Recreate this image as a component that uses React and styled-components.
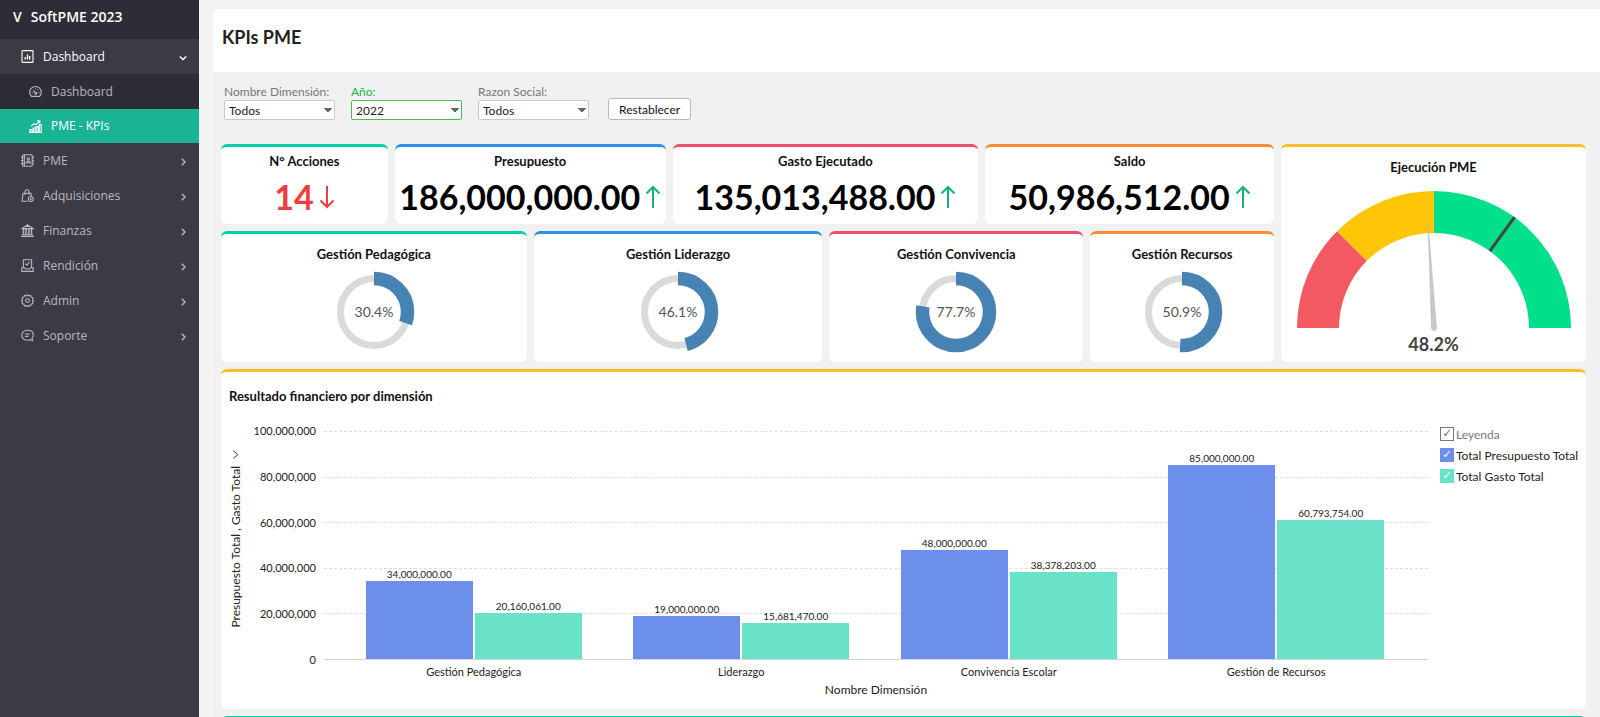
import { useState } from "react";
import styled, { createGlobalStyle } from "styled-components";

const colors = {
    sidebar: "#3c3b45",
    sidebarDark: "#2e2d35",
    active: "#1ab394",
    page: "#f1f1f1",
    teal: "#06cfae",
    blue: "#2f8fe8",
    red: "#ef4f6e",
    orange: "#fd8b33",
    yellow: "#ffbc2b",
    bar1: "#6b8feb",
    bar2: "#68e2c9",
    steel: "#4682b4",
};

const GlobalStyle = createGlobalStyle`
    * {
        box-sizing: border-box;
    }
    body {
        margin: 0;
        background: #f3f3f4;
        color: #222;
        font-family: Lato, "Liberation Sans", sans-serif;
        font-size: 12px;
    }
    button, select, input {
        font-family: inherit;
    }
`;

const Shell = styled.div`
    display: flex;
    height: 100vh;
    overflow: hidden;
`;

/* sidebar */
const Sidebar = styled.nav`
    flex: none;
    width: 199px;
    background: ${colors.sidebar};
    font-family: "Open Sans", "Noto Sans", sans-serif;
`;

const Brand = styled.div`
    display: flex;
    gap: 9px;
    height: 39px;
    padding: 7px 13px;
    background: ${colors.sidebarDark};
    color: #fff;
    font-size: 14px;
    line-height: 20px;
    font-weight: 600;
`;

const Menu = styled.ul`
    list-style: none;
    margin: 0;
    padding: 0;
`;

const MenuLink = styled.a`
    display: flex;
    align-items: center;
    gap: 9px;
    height: ${(p) => (p.$active ? 34 : 35)}px;
    padding: 0 12px 1px ${(p) => (p.$sub ? 29 : 21)}px;
    background: ${(p) => (p.$active ? colors.active : p.$sub ? colors.sidebarDark : "transparent")};
    color: ${(p) => (p.$active || p.$open ? "#fff" : "#b9b8bd")};
    font-size: 12px;
    text-decoration: none;
`;

const MenuText = styled.span`
    flex: 1;
`;

const Icon = styled.svg`
    flex: none;
    width: 13px;
    height: 13px;
    margin-top: 1px;
    fill: none;
    stroke: currentColor;
    stroke-width: 1.1;
`;

const Chevron = styled.svg`
    width: 8px;
    height: 8px;
    margin-top: 4px;
    fill: none;
    stroke: currentColor;
    stroke-width: 1.4;
`;

/* content */
const Main = styled.main`
    flex: 1;
    min-width: 0;
    display: flex;
    flex-direction: column;
    padding: 9px 0 0 14px;
    overflow: hidden;
`;

const PageHeader = styled.header`
    flex: none;
    height: 63px;
    padding: 16px 9px;
    background: #fff;
    border-top-left-radius: 4px;
`;

const PageTitle = styled.h1`
    margin: 0;
    font-size: 18px;
    line-height: 24px;
    font-weight: 700;
`;

const Body = styled.div`
    flex: 1;
    display: flex;
    flex-direction: column;
    gap: 7px;
    padding: 11px 14px 0 8px;
    background: ${colors.page};
`;

const Filters = styled.form`
    display: flex;
    align-items: flex-end;
    gap: 16px;
    padding: 0 3px;
    margin-bottom: 17px;
`;

const Field = styled.label`
    display: flex;
    flex-direction: column;
    width: 111px;
    color: ${(p) => (p.$on ? "#22b14c" : "#777")};
    line-height: 17px;
    white-space: nowrap;
`;

const Select = styled.select`
    appearance: none;
    height: 20px;
    padding: 0 4px;
    border: 1px solid ${(p) => (p.$on ? "#4cba50" : "#c8c9ce")};
    border-radius: 2px;
    background-color: #fff;
    background-image: linear-gradient(to top right, transparent 50%, #666 50%),
        linear-gradient(to bottom right, #666 50%, transparent 50%);
    background-size: 4px 5px;
    background-position: right 6px center, right 2px center;
    background-repeat: no-repeat;
    color: #222;
    font-size: 12px;
`;

const ResetButton = styled.button`
    height: 22px;
    margin-left: 3px;
    padding: 0 10px;
    border: 1px solid #bbb;
    border-radius: 3px;
    background: #fff;
    color: #111;
    font-size: 12px;
`;

const Summary = styled.div`
    display: flex;
    gap: 7px;
`;

const SummaryLeft = styled.div`
    flex: 1053 1 0;
    min-width: 0;
    display: flex;
    flex-direction: column;
    gap: 7px;
`;

const Row = styled.div`
    display: flex;
    gap: 7px;
`;

const Card = styled.section`
    flex: ${(p) => p.$grow || 1} 1 0;
    min-width: 0;
    display: flex;
    flex-direction: column;
    align-items: center;
    background: #fff;
    border-top: 3px solid ${(p) => p.$color};
    border-radius: 6px;
`;

const KpiCard = styled(Card)`
    height: 80px;
    padding-top: 6px;
`;

const DonutCard = styled(Card)`
    gap: 9px;
    height: 131px;
    padding-top: 12px;
`;

const GaugeCard = styled(Card)`
    padding-top: 12px;
`;

const CardTitle = styled.h2`
    margin: 0;
    color: #111;
    font-size: 13px;
    line-height: 16px;
    font-weight: 700;
    white-space: nowrap;
`;

const KpiValue = styled.div`
    display: flex;
    align-items: center;
    gap: 5px;
    margin-top: 8px;
    color: ${(p) => (p.$down ? "#ef3e3e" : "#000")};
    font-size: 34px;
    line-height: 40px;
    font-weight: 700;
`;

const Arrow = styled.svg`
    width: 16px;
    height: 24px;
    fill: none;
    stroke: ${(p) => (p.$down ? "#ef3e3e" : "#12b373")};
    stroke-width: 2;
    transform: ${(p) => (p.$down ? "rotate(180deg)" : "none")};
`;

const Drawing = styled.svg`
    display: block;
    flex: none;
    max-width: 100%;
`;

const DonutText = styled.text`
    fill: #555;
    font-size: 14px;
    text-anchor: middle;
`;

const GaugeDrawing = styled(Drawing)`
    margin-top: 15px;
`;

const GaugeText = styled.div`
    color: #444;
    font-size: 18px;
    line-height: 26px;
    font-weight: 700;
`;

/* chart */
const ChartCard = styled(Card)`
    flex: none;
    align-items: stretch;
    gap: 19px;
    height: 340px;
    padding: 16px 8px 11px 8px;
`;

const ChartBody = styled.div`
    display: grid;
    grid-template-columns: 14px 73px 1fr 150px;
    grid-template-rows: 241px 16px 20px;
`;

const AxisName = styled.button`
    grid-area: 1 / 1;
    align-self: end;
    display: flex;
    align-items: center;
    gap: 7px;
    margin-bottom: 36px;
    padding: 0;
    border: 0;
    background: none;
    color: #222;
    font-size: 12px;
    line-height: 14px;
    writing-mode: vertical-rl;
    transform: rotate(180deg);
    white-space: nowrap;
`;

const Ticks = styled.div`
    grid-area: 1 / 2;
    display: flex;
    flex-direction: column;
    justify-content: space-between;
    margin-bottom: -4px;
    text-align: right;
    font-size: 11px;
    line-height: 16px;
`;

const Grid = styled.div`
    grid-area: 1 / 3;
    display: flex;
    flex-direction: column;
    justify-content: space-between;
    margin: 8px 0 4px 8px;
`;

const GridLine = styled.div`
    border-top: 1px ${(p) => (p.$base ? "solid #d6d6d6" : "dashed #dedede")};
`;

const Groups = styled.div`
    grid-area: 1 / 3;
    display: flex;
    margin: 8px 0 4px 8px;
    padding: 0 18px 0 16px;
`;

const Group = styled.div`
    flex: 1;
    display: flex;
    align-items: flex-end;
    justify-content: center;
    gap: 2px;
    padding-bottom: 1px;
`;

const Bar = styled.div`
    width: 40%;
    background: ${(p) => p.$color};
    color: #222;
    font-size: 10px;
    text-align: center;
`;

const BarValue = styled.div`
    height: 14px;
    margin-top: -14px;
    line-height: 14px;
`;

const Categories = styled.div`
    grid-area: 2 / 3;
    display: flex;
    padding: 0 18px 0 24px;
    font-size: 11px;
    line-height: 16px;
    text-align: center;
`;

const Category = styled.div`
    flex: 1;
`;

const XName = styled.div`
    grid-area: 3 / 3;
    padding-left: 8px;
    font-size: 12px;
    line-height: 20px;
    text-align: center;
`;

const Legend = styled.div`
    grid-area: 1 / 4 / 3 / 5;
    display: flex;
    flex-direction: column;
    gap: 5px;
    padding: 3px 0 0 12px;
`;

const LegendItem = styled.label`
    display: flex;
    align-items: center;
    gap: 2px;
    height: 16px;
    color: ${(p) => (p.$muted ? "#777" : "#222")};
    font-size: 12px;
    white-space: nowrap;
`;

const Check = styled.input`
    appearance: none;
    flex: none;
    display: grid;
    place-items: center;
    width: 14px;
    height: 14px;
    margin: 0;
    border: 1px solid ${(p) => p.$color};
    background: ${(p) => (p.$muted ? "#fff" : p.$color)};
    color: ${(p) => (p.$muted ? "#666" : "#fff")};

    &:checked::before {
        content: "✓";
        font-family: "DejaVu Sans", sans-serif;
        font-size: 11px;
        line-height: 12px;
    }
`;

const NextCard = styled(Card)`
    flex: none;
    height: 40px;
`;

const icons = {
    report: (
        <>
            <rect x="1" y="0.6" width="11" height="11.8" rx="0.6" />
            <path d="M4.3 9.5V7M6.5 9.5V4.5M8.7 9.5V6" strokeWidth="1.4" />
        </>
    ),
    speed: (
        <>
            <path d="M2.4 11.4A5.8 5.8 0 1 1 10.6 11.4Z" />
            <path d="M6.8 8.2 4.2 5.2M2.6 7.6h1M9.4 7.6h1M6.5 3.2v1M9.2 4.6l-.7.7" />
            <circle cx="6.8" cy="8.2" r="1" />
        </>
    ),
    growth: (
        <>
            <path d="M1 12.4V9.6h2v2.8ZM4.3 12.4V8h2v4.4ZM7.2 12.4V6.6h2v5.8ZM10.2 12.4V4.6h2v7.8ZM0 12.4h13" />
            <path d="M2 6.2 5 3.6l1.8 1.2L10.6 1M8 .8h2.8v2.6" />
        </>
    ),
    book: (
        <>
            <rect x="1.6" y="0.8" width="9.6" height="11.4" rx="1" />
            <path d="M3.4.8v11.4M0 3.4h2.4M0 6.5h2.4M0 9.6h2.4M12.4 2.6v2M12.4 6v2M12.4 9.2v1.4" />
            <circle cx="7.3" cy="5" r="1.2" />
            <path d="M5.2 9c0-2.4 4.2-2.4 4.2 0Z" />
        </>
    ),
    bag: (
        <>
            <path d="M6.6 12.3H1L2 4.2h8l.4 3M4 6V2.8a2 2 0 0 1 4 0V6" />
            <circle cx="9.8" cy="10" r="2.5" />
            <path d="M8.9 10h1.8M9.8 9.1v1.8" />
        </>
    ),
    bank: (
        <>
            <path d="M.8 4.6 6.5 1l5.7 3.6ZM0 12.4h13M1 10.8h11M6.5 0v3" />
            <path d="M2.5 5v5.4M5.1 5v5.4M7.9 5v5.4M10.5 5v5.4" strokeWidth="1.5" />
        </>
    ),
    ballot: (
        <>
            <path d="M2.4 8.8V.8h8.2v8M.8 8.8h2.8l.8 1.2h4.2l.8-1.2h2.8v3.6H.8Z" />
            <path d="m4.4 4.6 1.6 1.6 2.8-3.2" />
        </>
    ),
    gear: (
        <>
            <path d="m6.5.6 1.3 1.2 1.8-.4.6 1.7 1.7.7-.4 1.6 1 1.3-1 1.3.3 1.7-1.7.6-.7 1.6-1.7-.3-1.2 1-1.2-1-1.8.3-.6-1.6-1.7-.6.3-1.7-1-1.3 1-1.3-.3-1.6 1.7-.7.6-1.7 1.8.4Z" />
            <circle cx="6.5" cy="6.6" r="1.9" />
        </>
    ),
    chat: (
        <>
            <path d="M6.5 1.2c3.4 0 5.8 1.8 5.8 4.8 0 1.5-.5 2.6-1.3 3.4l.7 2.2-2.6-.8c-.8.3-1.7.4-2.6.4C3.2 11.2.8 9.2.8 6.2s2.4-5 5.7-5Z" />
            <path d="M4 5h5M4 7.4h3.4" />
        </>
    ),
};

const menu = [
    { text: "Dashboard", icon: "report", open: true },
    { text: "Dashboard", icon: "speed", sub: true },
    { text: "PME - KPIs", icon: "growth", sub: true, active: true },
    { text: "PME", icon: "book" },
    { text: "Adquisiciones", icon: "bag" },
    { text: "Finanzas", icon: "bank" },
    { text: "Rendición", icon: "ballot" },
    { text: "Admin", icon: "gear" },
    { text: "Soporte", icon: "chat" },
];

const kpis = [
    { title: "N° Acciones", value: "14", grow: 167, color: colors.teal, down: true },
    { title: "Presupuesto", value: "186,000,000.00", grow: 271, color: colors.blue },
    { title: "Gasto Ejecutado", value: "135,013,488.00", grow: 306, color: colors.red },
    { title: "Saldo", value: "50,986,512.00", grow: 289, color: colors.orange },
];

const donuts = [
    { title: "Gestión Pedagógica", value: 30.4, grow: 306, color: colors.teal },
    { title: "Gestión Liderazgo", value: 46.1, grow: 289, color: colors.blue },
    { title: "Gestión Convivencia", value: 77.7, grow: 254, color: colors.red },
    { title: "Gestión Recursos", value: 50.9, grow: 184, color: colors.orange },
];

const results = [
    { name: "Gestión Pedagógica", budget: 34000000, spent: 20160061 },
    { name: "Liderazgo", budget: 19000000, spent: 15681470 },
    { name: "Convivencia Escolar", budget: 48000000, spent: 38378203 },
    { name: "Gestión de Recursos", budget: 85000000, spent: 60793754 },
];

const ticks = [100000000, 80000000, 60000000, 40000000, 20000000, 0];

const format = (n, digits = 0) =>
    n.toLocaleString("en-US", { minimumFractionDigits: digits });

const Donut = ({ value }) => (
    <Drawing width="82" height="82" viewBox="-41 -41 82 82">
        <circle r="33.5" fill="none" stroke="#d9dadb" strokeWidth="7" />
        <circle
            r="33.5"
            fill="none"
            stroke={colors.steel}
            strokeWidth="13.5"
            pathLength="100"
            strokeDasharray={`${value} 100`}
            transform="rotate(-90)"
        />
        <DonutText y="5">{value}%</DonutText>
    </Drawing>
);

// point on the gauge, t goes from 0 (left) to 100 (right)
const polar = (t, r) => {
    const a = Math.PI * (1 - t / 100);
    return `${(r * Math.cos(a)).toFixed(2)} ${(-r * Math.sin(a)).toFixed(2)}`;
};

const slice = (from, to) =>
    `M${polar(from, 137)}A137 137 0 0 1 ${polar(to, 137)}L${polar(to, 95)}A95 95 0 0 0 ${polar(from, 95)}Z`;

const Gauge = ({ value }) => (
    <GaugeDrawing width="274" height="141" viewBox="-137 -138 274 141">
        <path d={slice(0, 25)} fill="#f25961" />
        <path d={slice(25, 50)} fill="#ffc507" />
        <path d={slice(50, 100)} fill="#00df8a" />
        <path d={`M${polar(70, 95)}L${polar(70, 137)}`} stroke="#444" strokeWidth="3" />
        <path
            d="M-2.5 0 0-103 2.5 0A2.5 2.5 0 0 1-2.5 0Z"
            fill="#c8c8c8"
            stroke="#b5b5b5"
            strokeWidth="0.5"
            transform={`rotate(${(value - 50) * 1.8})`}
        />
    </GaugeDrawing>
);

const App = () => {
    const [year, setYear] = useState("2022");
    const [shown, setShown] = useState({ budget: true, spent: true });

    const toggle = (key) => setShown({ ...shown, [key]: !shown[key] });
    const all = shown.budget && shown.spent;

    return (
        <Shell>
            <GlobalStyle />
            <Sidebar>
                <Brand>
                    <span>V</span>
                    <span>SoftPME 2023</span>
                </Brand>
                <Menu>
                    {menu.map((item) => (
                        <li key={item.icon}>
                            <MenuLink href="#" $sub={item.sub} $active={item.active} $open={item.open}>
                                <Icon viewBox="0 0 13 13">{icons[item.icon]}</Icon>
                                <MenuText>{item.text}</MenuText>
                                {!item.sub && (
                                    <Chevron viewBox="0 0 8 8">
                                        <path d={item.open ? "M.8 2.4 4 5.6 7.2 2.4" : "M2.8.8 6 4 2.8 7.2"} />
                                    </Chevron>
                                )}
                            </MenuLink>
                        </li>
                    ))}
                </Menu>
            </Sidebar>

            <Main>
                <PageHeader>
                    <PageTitle>KPIs PME</PageTitle>
                </PageHeader>
                <Body>
                    <Filters onSubmit={(e) => e.preventDefault()}>
                        <Field>
                            Nombre Dimensión:
                            <Select>
                                <option>Todos</option>
                            </Select>
                        </Field>
                        <Field $on>
                            Año:
                            <Select $on value={year} onChange={(e) => setYear(e.target.value)}>
                                <option>2022</option>
                                <option>2023</option>
                            </Select>
                        </Field>
                        <Field>
                            Razon Social:
                            <Select>
                                <option>Todos</option>
                            </Select>
                        </Field>
                        <ResetButton type="button" onClick={() => setYear("2022")}>
                            Restablecer
                        </ResetButton>
                    </Filters>

                    <Summary>
                        <SummaryLeft>
                            <Row>
                                {kpis.map((k) => (
                                    <KpiCard key={k.title} $grow={k.grow} $color={k.color}>
                                        <CardTitle>{k.title}</CardTitle>
                                        <KpiValue $down={k.down}>
                                            {k.value}
                                            <Arrow $down={k.down} viewBox="0 0 16 24">
                                                <path d="M8 23V2M1.5 8.5 8 2l6.5 6.5" />
                                            </Arrow>
                                        </KpiValue>
                                    </KpiCard>
                                ))}
                            </Row>
                            <Row>
                                {donuts.map((d) => (
                                    <DonutCard key={d.title} $grow={d.grow} $color={d.color}>
                                        <CardTitle>{d.title}</CardTitle>
                                        <Donut value={d.value} />
                                    </DonutCard>
                                ))}
                            </Row>
                        </SummaryLeft>
                        <GaugeCard $grow={305} $color={colors.yellow}>
                            <CardTitle>Ejecución PME</CardTitle>
                            <Gauge value={48.2} />
                            <GaugeText>48.2%</GaugeText>
                        </GaugeCard>
                    </Summary>

                    <ChartCard $color={colors.yellow}>
                        <CardTitle>Resultado financiero por dimensión</CardTitle>
                        <ChartBody>
                            <AxisName type="button">
                                Presupuesto Total , Gasto Total
                                <svg width="10" height="8" viewBox="0 0 10 8" fill="none" stroke="#444">
                                    <path d="M1 7 5 2l4 5" transform="rotate(-90 5 4)" />
                                </svg>
                            </AxisName>
                            <Ticks>
                                {ticks.map((t) => (
                                    <div key={t}>{format(t)}</div>
                                ))}
                            </Ticks>
                            <Grid>
                                {ticks.map((t) => (
                                    <GridLine key={t} $base={t === 0} />
                                ))}
                            </Grid>
                            <Groups>
                                {results.map((r) => (
                                    <Group key={r.name}>
                                        {shown.budget && (
                                            <Bar $color={colors.bar1} style={{ height: `${r.budget / 1000000}%` }}>
                                                <BarValue>{format(r.budget, 2)}</BarValue>
                                            </Bar>
                                        )}
                                        {shown.spent && (
                                            <Bar $color={colors.bar2} style={{ height: `${r.spent / 1000000}%` }}>
                                                <BarValue>{format(r.spent, 2)}</BarValue>
                                            </Bar>
                                        )}
                                    </Group>
                                ))}
                            </Groups>
                            <Categories>
                                {results.map((r) => (
                                    <Category key={r.name}>{r.name}</Category>
                                ))}
                            </Categories>
                            <XName>Nombre Dimensión</XName>
                            <Legend>
                                <LegendItem $muted>
                                    <Check
                                        type="checkbox"
                                        $muted
                                        $color="#777"
                                        checked={all}
                                        onChange={() => setShown({ budget: !all, spent: !all })}
                                    />
                                    Leyenda
                                </LegendItem>
                                <LegendItem>
                                    <Check
                                        type="checkbox"
                                        $color={colors.bar1}
                                        checked={shown.budget}
                                        onChange={() => toggle("budget")}
                                    />
                                    Total Presupuesto Total
                                </LegendItem>
                                <LegendItem>
                                    <Check
                                        type="checkbox"
                                        $color={colors.bar2}
                                        checked={shown.spent}
                                        onChange={() => toggle("spent")}
                                    />
                                    Total Gasto Total
                                </LegendItem>
                            </Legend>
                        </ChartBody>
                    </ChartCard>

                    <NextCard $color={colors.teal} />
                </Body>
            </Main>
        </Shell>
    );
};

export default App;
